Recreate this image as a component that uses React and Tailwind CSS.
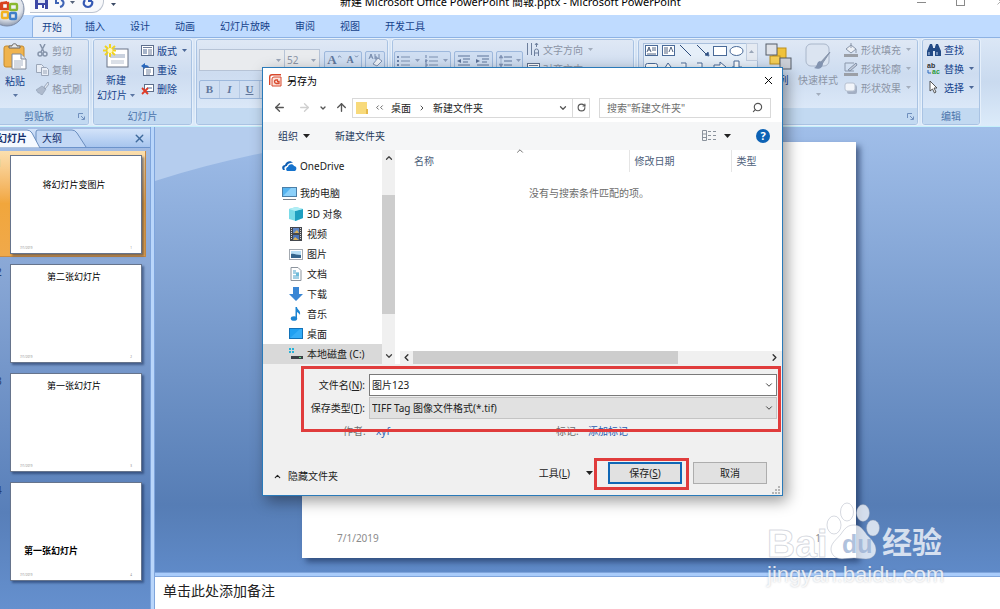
import React, { useState } from 'react';
import { ArrowLeft, ArrowRight, ArrowUp, ChevronDown, ChevronLeft, ChevronRight, ChevronUp, RotateCw, Search, X } from 'lucide-react';

const TABS = ['开始', '插入', '设计', '动画', '幻灯片放映', '审阅', '视图', '开发工具'];

const SLIDES = [
  { id: 1, title: '将幻灯片变图片', style: 'pt-[24px] pr-[4px] text-center' },
  { id: 2, title: '第二张幻灯片', style: 'pt-[7px] pr-[4px] text-center' },
  { id: 3, title: '第一张幻灯片', style: 'pt-[7px] pr-[4px] text-center' },
  { id: 4, title: '第一张幻灯片', style: 'pt-[63px] pl-[13px] font-bold' },
];

const FOLDERS = [
  { name: '3D 对象', icon: CubeIcon },
  { name: '视频', icon: VideoIcon },
  { name: '图片', icon: PictureIcon },
  { name: '文档', icon: DocumentIcon },
  { name: '下载', icon: DownloadIcon },
  { name: '音乐', icon: MusicIcon },
  { name: '桌面', icon: DesktopIcon },
  { name: '本地磁盘 (C:)', icon: DiskIcon, selected: true },
];

/* ---------- icons ---------- */

function Caret({ className = 'text-[#5b76a3]' }) {
  return (
    <svg width="5" height="3" viewBox="0 0 5 3" className={`shrink-0 ${className}`}>
      <path d="M0 0h5L2.5 3z" fill="currentColor" />
    </svg>
  );
}

function MenuArrow() {
  return (
    <svg width="7" height="4" viewBox="0 0 7 4" className="shrink-0">
      <path d="M0 0h7L3.5 4z" fill="#222" />
    </svg>
  );
}

function OfficeLogo() {
  return (
    <svg width="36" height="36" viewBox="0 0 36 36">
      <defs>
        <radialGradient id="orb" cx="50%" cy="35%" r="65%">
          <stop offset="0" stopColor="#fff" />
          <stop offset="0.7" stopColor="#dfe3ea" />
          <stop offset="1" stopColor="#8f9bb0" />
        </radialGradient>
      </defs>
      <circle cx="18" cy="18" r="17" fill="url(#orb)" stroke="#7d8ba5" />
      <path d="M9 12l9-2v3h-6v6H9z" fill="#d9431e" />
      <rect x="13" y="12" width="6" height="6" fill="none" stroke="#d9431e" strokeWidth="2.4" />
      <rect x="21" y="13" width="7" height="6" rx="1" fill="none" stroke="#8ab82f" strokeWidth="2.4" />
      <rect x="13" y="21" width="6" height="6" rx="1" fill="none" stroke="#f3b321" strokeWidth="2.4" />
      <rect x="21" y="22" width="6" height="6" rx="1" fill="none" stroke="#3f7fc9" strokeWidth="2.4" />
    </svg>
  );
}

function PasteIcon() {
  return (
    <svg width="24" height="27" viewBox="0 0 24 27">
      <rect x="1" y="3" width="20" height="21" rx="2" fill="#efb34e" stroke="#c58a2c" />
      <path d="M6 5V3h3c0-3 5-3 5 0h3v2z" fill="#e8e8e8" stroke="#666" />
      <path d="M9 11h9l5 5v10H9z" fill="#fff" stroke="#7e8797" />
      <path d="M18 11v5h5" fill="#dfe6ef" stroke="#7e8797" />
      <path d="M11 18h9M11 20h9M11 22h9M11 24h7" stroke="#a9b4c6" />
    </svg>
  );
}

function CutIcon() {
  return (
    <svg width="13" height="13" viewBox="0 0 13 13" fill="none" stroke="#8795ab" strokeWidth="1.5">
      <path d="M4 0l4 8M9 0L5 8" />
      <circle cx="4" cy="10" r="2" />
      <circle cx="9" cy="10" r="2" />
    </svg>
  );
}

function CopyIcon() {
  return (
    <svg width="13" height="13" viewBox="0 0 13 13" fill="#e9eef6" stroke="#9ba6b8">
      <path d="M.5 1.5h5l2 2v6h-7z" />
      <path d="M5.5 4.5h5l2 2v6h-7z" />
      <path d="M7 8h4M7 10h4" />
    </svg>
  );
}

function BrushIcon() {
  return (
    <svg width="13" height="13" viewBox="0 0 13 13">
      <path d="M0 8l6-4 4 3-4 6c-2 0-1-2-3-2s-1-2-3-3z" fill="#aebacd" stroke="#98a6bb" strokeWidth=".8" />
      <path d="M8 5l4-5 1 2-4 5z" fill="#dfe5ee" stroke="#8a98ae" strokeWidth=".8" />
    </svg>
  );
}

function NewSlideIcon() {
  return (
    <svg width="26" height="25" viewBox="0 0 26 25">
      <rect x="4" y="5" width="21" height="18" fill="#fff" stroke="#6a7487" />
      <rect x="7" y="10" width="15" height="4" fill="#c9d1de" />
      <path d="M8 17h13M8 19h13" stroke="#b6c0cf" />
      <path d="M7 0v13M0 6.5h13M2 2l10 9M12 2L2 11" stroke="#f1d320" strokeWidth="2" />
      <circle cx="7" cy="6.5" r="2.5" fill="#fff9bd" />
    </svg>
  );
}

function LayoutIcon() {
  return (
    <svg width="13" height="12" viewBox="0 0 13 12">
      <rect x=".5" y=".5" width="12" height="10" fill="#fff" stroke="#5e6f8c" />
      <path d="M2 2.5h9" stroke="#6f7f9c" />
      <rect x="2" y="4" width="4" height="5" fill="#a6b4ca" />
      <path d="M7 5h4M7 7h4M7 9h4" stroke="#6f7f9c" />
    </svg>
  );
}

function ResetIcon() {
  return (
    <svg width="13" height="13" viewBox="0 0 13 13">
      <rect x="2.5" y="4.5" width="10" height="8" fill="#fff" stroke="#5e6f8c" />
      <path d="M5 7h5M5 9h5M5 11h4" stroke="#7687a3" />
      <path d="M0 3l4-3v2c3 0 4 1 4 3-1-1-2-1-4-1v2z" fill="#2a68bd" />
    </svg>
  );
}

function DeleteIcon() {
  return (
    <svg width="13" height="12" viewBox="0 0 13 12">
      <rect x="3.5" y="1.5" width="9" height="7" fill="#fff" stroke="#5e6f8c" />
      <path d="M6 4h5v2H6z" fill="#a6b4ca" />
      <path d="M1 5l6 6M7 5l-6 6" stroke="#e03a26" strokeWidth="1.8" />
    </svg>
  );
}

function ListIcon({ numbered }) {
  return (
    <svg width="13" height="12" viewBox="0 0 13 12">
      <path d="M4 2h9M4 6h9M4 10h9" stroke="#7d90b0" strokeWidth="1.2" />
      <path d={numbered ? 'M1 0v3M0 5h2v1H0v1h2M0 9h2v2H0' : 'M0 1h2v2H0zM0 5h2v2H0zM0 9h2v2H0z'} fill={numbered ? 'none' : '#6c82a8'} stroke={numbered ? '#6c82a8' : 'none'} />
    </svg>
  );
}

function IndentIcon({ flip }) {
  return (
    <svg width="14" height="12" viewBox="0 0 14 12">
      <path d="M1 1h12M6 4h7M6 7h5M1 10h12" stroke="#5f7499" strokeWidth="1.2" />
      <path d={flip ? 'M0 4l4 2-4 2z' : 'M4 4L0 6l4 2z'} fill="#5f7499" />
    </svg>
  );
}

function SpacingIcon() {
  return (
    <svg width="14" height="12" viewBox="0 0 14 12">
      <path d="M5 2h8M5 6h8M5 10h8" stroke="#5f7499" strokeWidth="1.2" />
      <path d="M2 0l2 3H0zM2 12l2-3H0zM2 2v8" fill="#7f93b5" stroke="#7f93b5" strokeWidth=".6" />
    </svg>
  );
}

function TextDirectionIcon() {
  return (
    <svg width="13" height="13" viewBox="0 0 13 13" fill="none" stroke="#6d7f9d">
      <path d="M.5 0v12M4.5 0v12M7.5 13V8q0-2 2-2t2 2v5M8 10h4M9.5 0v4M8 2l1.5-2L11 2" />
    </svg>
  );
}

function ShapeGallery() {
  return (
    <svg width="115" height="56" viewBox="0 0 115 56" fill="none" stroke="#4a6a98">
      <rect x=".5" y=".5" width="114" height="55" fill="#e6eff9" stroke="#a9bfdc" />
      <rect x="103.500" y=".5" width="11" height="17" fill="#e5eaf2" stroke="#c1cddf" />
      <path d="M106 10h5l-2.5-3z" fill="#9aa6b8" stroke="none" />
      <rect x="2.5" y="2.5" width="12" height="10" fill="#fff" />
      <path d="M4 9l2-5 2 5M5 7h2M9 5h4M9 7h4M4 11h9" stroke="#243b60" strokeWidth=".8" />
      <rect x="19.5" y="2.5" width="12" height="10" fill="#fff" />
      <path d="M22 4v7M24 4v7M26 9l2-5 2 5" stroke="#243b60" strokeWidth=".8" />
      <path d="M37 2l11 11M54 2l10 10" stroke="#2f4d7c" />
      <path d="M66 13l-1-4-3 3z" fill="#2f4d7c" />
      <rect x="70.5" y="3.5" width="13" height="9" fill="#fff" />
      <ellipse cx="93.5" cy="8" rx="6.5" ry="4.5" fill="#fff" />
      <rect x="2.5" y="20.5" width="12" height="8" rx="2" fill="#fff" />
      <path d="M25 20l6 8H20zM38 20h5v8h5M54 20h5v8h5M71 22h6v-3l6 5-6 5v-3h-6zM91 18h5v6h3l-5 5-5-5h2z" fill="#fff" />
    </svg>
  );
}

function ArrangeIcon() {
  return (
    <svg width="27" height="27" viewBox="0 0 27 27">
      <rect x="8" y="5" width="13" height="12" fill="#f0c23b" stroke="#bd8f1c" />
      <rect x="5" y="13" width="10" height="8" fill="#f5cf58" stroke="#bd8f1c" />
      <rect x="1" y="1" width="11" height="11" fill="#dfe2e8" stroke="#555c69" />
      <rect x="15" y="15" width="11" height="11" fill="#cdd1d9" stroke="#555c69" />
    </svg>
  );
}

function QuickStyleIcon() {
  return (
    <svg width="26" height="27" viewBox="0 0 26 27">
      <rect x="1" y="1" width="23" height="22" rx="5" fill="#dbe4f1" stroke="#a9b6ca" />
      <path d="M25 9L15 20l2 1z" fill="#8d9bb2" stroke="#8593aa" />
      <path d="M15 18c-4 1-2 5-6 7 5 2 9 0 9-5z" fill="#8293b0" />
    </svg>
  );
}

function FillIcon() {
  return (
    <svg width="14" height="14" viewBox="0 0 14 14">
      <path d="M2 6l5-4 5 4-5 4z" fill="#eef1f6" stroke="#8b97aa" />
      <path d="M7 0v5M12 6v4" stroke="#8b97aa" />
      <rect x="0" y="11" width="14" height="3" fill="#9b9fa6" />
    </svg>
  );
}

function OutlineIcon() {
  return (
    <svg width="14" height="14" viewBox="0 0 14 14">
      <path d="M10 1H1v8h9" fill="none" stroke="#8b97aa" />
      <path d="M4 8l8-7 1 2-7 6z" fill="#c3cbd9" stroke="#8290a7" />
      <rect x="0" y="11" width="14" height="3" fill="#9b9fa6" />
    </svg>
  );
}

function EffectIcon() {
  return (
    <svg width="14" height="12" viewBox="0 0 14 12">
      <rect x="3" y="3" width="10" height="9" rx="2" fill="#a4b0c4" />
      <rect x="1" y="1" width="10" height="8" rx="2" fill="#f2f5fa" stroke="#b7c1d1" />
    </svg>
  );
}

function FindIcon() {
  return (
    <svg width="14" height="12" viewBox="0 0 14 12" fill="#234a85">
      <path d="M3 0h2l1 3v9H0V7zM9 0h2l3 7v5H8V3z" />
      <path d="M5 4h4v3H5z" />
      <path d="M2 8v3M10 8v3" stroke="#b9cdea" />
    </svg>
  );
}

function ReplaceIcon() {
  return (
    <svg width="14" height="14" viewBox="0 0 14 14" fontFamily="Liberation Sans" fontWeight="bold" fontSize="7">
      <text x="0" y="6" fill="#333">ab</text>
      <text x="5" y="12" fill="#2b9a3b">ac</text>
      <path d="M1 8v3h3" fill="none" stroke="#2a68bd" />
    </svg>
  );
}

function CursorIcon() {
  return (
    <svg width="14" height="13" viewBox="0 0 14 13">
      <path d="M3 0v10l2.5-2 2 4 1.5-1-2-4h3z" fill="#fff" stroke="#444" strokeWidth=".9" />
    </svg>
  );
}

function OneDriveIcon() {
  return (
    <svg width="15" height="10" viewBox="0 0 15 10">
      <path d="M1 9C-1 6 1 4 3 4c1-4 6-5 8-2-4-1-6 2-6 3-3 0-3 3-2 4z" fill="#0f5fb3" />
      <path d="M5 10c-2-2 0-4 1-4 0-3 5-4 6-1 3 0 3 4 1 5z" fill="#1673cd" />
    </svg>
  );
}

function ComputerIcon() {
  return (
    <svg width="15" height="13" viewBox="0 0 15 13">
      <rect x=".5" y=".5" width="14" height="9" fill="#55b4f0" stroke="#4b7fa8" />
      <path d="M1 9L9 1h5v8z" fill="#8bd0fa" />
      <path d="M1 12.5h13" stroke="#77818c" />
    </svg>
  );
}

function CubeIcon() {
  return (
    <svg width="14" height="14" viewBox="0 0 14 14">
      <path d="M0 2l7-2 7 2v9l-7 3-7-2z" fill="#7adbe8" />
      <path d="M6 4l8-2v9l-8 3z" fill="#1f9fc0" />
      <path d="M0 2l7-2 7 2-8 2z" fill="#b2eef5" />
    </svg>
  );
}

function VideoIcon() {
  return (
    <svg width="14" height="14" viewBox="0 0 14 14">
      <rect x="1" width="12" height="14" fill="#44474d" />
      <path d="M2.5 1v12M11.5 1v12" stroke="#d8d8d8" strokeDasharray="1 1" />
      <rect x="4" y="1" width="6" height="5" fill="#5f86c4" />
      <rect x="4" y="8" width="6" height="5" fill="#4a73b6" />
      <path d="M5 6l3-3 2 3zM4 13l2-3 4 3z" fill="#d8b05a" />
    </svg>
  );
}

function PictureIcon() {
  return (
    <svg width="14" height="11" viewBox="0 0 14 11">
      <rect x=".5" y=".5" width="13" height="10" fill="#fff" stroke="#a3a9b0" />
      <rect x="2" y="2" width="10" height="4" fill="#b7def5" />
      <path d="M2 5c3-1 5 1 10 1v3H2z" fill="#34658d" />
    </svg>
  );
}

function DocumentIcon() {
  return (
    <svg width="14" height="14" viewBox="0 0 14 14">
      <path d="M2 .5h7l3 3v10H2z" fill="#fff" stroke="#8d959e" />
      <path d="M4 4h3M4 6h6M4 9h6M4 11h6" stroke="#46a1cb" />
      <path d="M7 6h3v3H7z" fill="#6ebbd9" />
    </svg>
  );
}

function DownloadIcon() {
  return (
    <svg width="14" height="14" viewBox="0 0 14 14">
      <path d="M4 0h6v7h4l-7 7-7-7h4z" fill="#3a86d4" />
    </svg>
  );
}

function MusicIcon() {
  return (
    <svg width="14" height="14" viewBox="0 0 14 14" fill="#1c84d2">
      <ellipse cx="5" cy="11.5" rx="3.2" ry="2.3" />
      <path d="M6.5 0H8c0 3 4 3 3 8-1-2-2-2-3-3v6.5H6.5z" />
    </svg>
  );
}

function DesktopIcon() {
  return (
    <svg width="14" height="12" viewBox="0 0 14 12">
      <rect x=".5" y=".5" width="13" height="10" fill="#1fa0f2" stroke="#1272b8" />
      <path d="M1 10L11 1h2v9z" fill="#45b6fa" opacity=".6" />
    </svg>
  );
}

function DiskIcon() {
  return (
    <svg width="14" height="12" viewBox="0 0 14 12">
      <path d="M0 0h2v2H0zM3 0h2v2H3zM0 3h2v2H0zM3 3h2v2H3z" fill="#27b3d8" />
      <rect x="2" y="8" width="12" height="3" fill="#3c4147" />
      <rect x="10" y="9" width="2" height="1" fill="#58e27d" />
    </svg>
  );
}

function PptIcon() {
  return (
    <svg width="13" height="13" viewBox="0 0 13 13" fill="none" stroke="#d9492c">
      <path d="M.7 11V3q0-2.300 2.300-2.300h9" strokeWidth="1.400" />
      <path d="M3 12V5q0-2 2-2h7v9z" fill="#fbe3dc" strokeWidth="1" />
      <path d="M9 6H7Q5.500 6 5.500 7.500T7 9.500h1M8 7.500h2v2H8" strokeWidth="1.300" />
    </svg>
  );
}

/* ---------- window chrome ---------- */

function TitleBar() {
  return (
    <header className="relative h-[15px] bg-white">
      <div className="flex h-full items-start overflow-hidden">
        <div className="ml-[30px] flex h-[13px] w-[74px] shrink-0 items-start gap-[5px] rounded-br-xl border-r border-b border-[#bcc3cf] bg-[#f8f9fb] pl-[5px]">
          <button aria-label="保存" className="h-[9px]">
            <svg width="13" height="9" viewBox="0 0 13 9">
              <path d="M0 0h13v9H0z" fill="#3c47a5" />
              <path d="M3 0h7v3H3z" fill="#dfe4f5" />
              <path d="M3 5h7v4H3z" fill="#fff" />
              <path d="M7 5h2v3H7z" fill="#3c47a5" />
            </svg>
          </button>
          <button aria-label="撤消" className="flex gap-[4px]">
            <svg width="13" height="9" viewBox="0 0 13 9" fill="none" stroke="#3f64b5" strokeWidth="2">
              <path d="M3 0v3h3M8 0c4 1 3 6-1 7" />
            </svg>
            <Caret className="mt-[1px] text-[#55627a]" />
          </button>
          <button aria-label="恢复" className="ml-[2px]">
            <svg width="13" height="9" viewBox="0 0 13 9" fill="none" stroke="#3559b4" strokeWidth="2.200">
              <path d="M3 0C0 4 3 7 6 7s5-3 4-6M6 1h4" />
            </svg>
          </button>
        </div>
        <Caret className="mt-[3px] ml-[7px] text-[#3b4a66]" />
        <h1 className="mt-[-6px] ml-[224px] text-[11px] leading-4 whitespace-nowrap text-black">
          新建 Microsoft Office PowerPoint 簡報.pptx - Microsoft PowerPoint
        </h1>
        <div className="ml-auto flex h-[6px] shrink-0 items-end gap-[30px] text-[#8a8a8a]">
          <button aria-label="最小化" className="mb-[3px] h-px w-[9px] border-b border-[#8a8a8a]" />
          <button aria-label="最大化" className="h-[6px] w-[9px] border border-t-0 border-[#8a8a8a]" />
          <button aria-label="关闭" className="mr-[-6px] h-[6px] overflow-hidden"><X size={11} strokeWidth={1.500} className="-mt-1" /></button>
        </div>
      </div>
      <button aria-label="Office 按钮" className="absolute top-[-9px] left-[-11px] z-10"><OfficeLogo /></button>
    </header>
  );
}

function RibbonTabs() {
  const [active, setActive] = useState('开始');
  return (
    <nav className="flex h-[22px] gap-px bg-[#bfdbff] pl-[32px]">
      {TABS.map(tab => (
        <button
          key={tab}
          onClick={() => setActive(tab)}
          className={`text-[10px] leading-5 text-[#15428b] ${
            active === tab ? 'mt-px rounded-t-sm border border-b-0 border-[#8db2e3] bg-[#e6eef9] px-[9px]' : 'px-[12px]'
          }`}
        >
          {tab}
        </button>
      ))}
    </nav>
  );
}

function Launcher() {
  return (
    <svg width="7" height="7" viewBox="0 0 7 7" fill="none" stroke="#6f8fbd">
      <path d="M.5 5V.5H5M3 3l3 3M6.5 3.5v3h-3" />
    </svg>
  );
}

function RibbonGroup({ label, launcher, className, children }) {
  return (
    <section className={`flex shrink-0 flex-col overflow-hidden rounded-[3px] border border-[#a9c3e3] shadow-[0_0_0_1px_#e6f0fb] ${className}`}>
      <div className="flex h-[68px] bg-linear-to-b from-[#dfe8f5] via-[#cddcf0] to-[#dbe8f8]">{children}</div>
      <div className="flex h-4 items-center bg-[#c2d9f1] text-[10px] leading-4 text-[#4a74ac]">
        <span className="flex-1 text-center">{label}</span>
        {launcher && <button aria-label={`${label}选项`} className="mr-[3px]"><Launcher /></button>}
      </div>
    </section>
  );
}

function SmallButton({ icon, label, caret, disabled }) {
  return (
    <button className={`flex h-[19px] items-center gap-[3px] text-[10px] leading-4 whitespace-nowrap ${disabled ? 'text-[#8b94a5]' : 'text-[#15428b]'}`}>
      <span className="flex w-[14px] justify-center">{icon}</span>
      {label}
      {caret && <Caret className={disabled ? 'ml-[2px] text-[#a3adbd]' : 'ml-[2px] text-[#4b6798]'} />}
    </button>
  );
}

function ToolBox({ children, className = '' }) {
  return (
    <div className={`flex h-[19px] shrink-0 items-center rounded-[2px] border border-[#9db8dc] bg-[#cfdef2] font-['Liberation_Serif',serif] font-bold text-[#61779c] ${className}`}>
      {children}
    </div>
  );
}

function Ribbon() {
  return (
    <div className="flex gap-[4px] overflow-hidden border-t border-b border-t-[#8db2e3] border-b-[#c5f0fb] bg-linear-to-b from-[#dbe7f6] via-[#c9daef] to-[#dcebfa] py-px text-[#15428b]">
      <RibbonGroup label="剪贴板" launcher className="w-[89px] rounded-l-none border-l-0">
        <button className="flex w-[30px] flex-col items-center pt-[3px] text-[10px] leading-4">
          <PasteIcon />
          <span className="mt-[3px] whitespace-nowrap">粘贴</span>
          <Caret className="mt-[5px] text-[#5b76a3]" />
        </button>
        <div className="ml-[5px] pt-[1px]">
          <SmallButton disabled icon={<CutIcon />} label="剪切" />
          <SmallButton disabled icon={<CopyIcon />} label="复制" />
          <SmallButton disabled icon={<BrushIcon />} label="格式刷" />
        </div>
      </RibbonGroup>

      <RibbonGroup label="幻灯片" className="w-[99px]">
        <button className="flex w-[44px] flex-col items-center pt-[4px] text-[10px] leading-[15px]">
          <NewSlideIcon />
          <span className="mt-1">新建</span>
          <span className="flex items-center gap-[3px] whitespace-nowrap">幻灯片<Caret /></span>
        </button>
        <div className="ml-[2px] pt-[1px]">
          <SmallButton icon={<LayoutIcon />} label="版式" caret />
          <SmallButton icon={<ResetIcon />} label="重设" />
          <SmallButton icon={<DeleteIcon />} label="删除" />
        </div>
      </RibbonGroup>

      <RibbonGroup label="字体" launcher className="w-[192px]">
        <div className="px-[2px] pt-[9px]">
          <div className="flex items-center">
            <div className="relative">
              <select aria-label="字体" disabled className="block h-[22px] w-[86px] appearance-none border border-[#b6c3d6] bg-[#e9ebee]" />
              <Caret className="pointer-events-none absolute top-[10px] right-[4px] text-[#9aa5b8]" />
            </div>
            <div className="relative -ml-px">
              <select aria-label="字号" disabled className="block h-[22px] w-[36px] appearance-none border border-[#b6c3d6] bg-[#e9ebee] pl-[2px] text-[10px] text-[#8b94a5]">
                <option>52</option>
              </select>
              <Caret className="pointer-events-none absolute top-[10px] right-[4px] text-[#9aa5b8]" />
            </div>
            <ToolBox className="ml-[4px] w-[38px] justify-around">
              <button aria-label="增大字号" className="flex items-center text-[13px] leading-4">A<ChevronUp size={5} strokeWidth={4} className="mb-2" /></button>
              <button aria-label="减小字号" className="flex items-center text-[10px] leading-4">A<ChevronDown size={5} strokeWidth={4} className="mb-2" /></button>
            </ToolBox>
            <ToolBox className="ml-[3px] w-[20px] justify-around">
              <button aria-label="清除格式">
                <svg width="14" height="14" viewBox="0 0 14 14">
                  <path d="M1 6l2-5 2 5M2 4h2M7 1v5h2V4H7M11 1v5" fill="none" stroke="#61779c" strokeWidth=".8" />
                  <path d="M5 11l5-6 4 3-5 5z" fill="#eef2f8" stroke="#7f92b2" />
                </svg>
              </button>
            </ToolBox>
          </div>
          <ToolBox className="mt-[9px] w-[150px] text-[11px]">
            <button className="h-full w-[20px] border-r border-[#b5c9e4]">B</button>
            <button className="h-full w-[20px] border-r border-[#b5c9e4] italic">I</button>
            <button className="h-full w-[20px] border-r border-[#b5c9e4] underline">U</button>
          </ToolBox>
        </div>
      </RibbonGroup>

      <RibbonGroup label="段落" launcher className="w-[242px]">
        <div className="flex gap-[3px] pt-[11px] pl-px">
          <ToolBox className="w-[57px] justify-around">
            <button aria-label="项目符号"><ListIcon /></button><Caret className="text-[#8fa0bd]" />
            <button aria-label="编号"><ListIcon numbered /></button><Caret className="text-[#8fa0bd]" />
          </ToolBox>
          <ToolBox className="w-[39px] justify-around">
            <button aria-label="减少缩进"><IndentIcon /></button>
            <button aria-label="增加缩进"><IndentIcon flip /></button>
          </ToolBox>
          <ToolBox className="w-[27px] justify-around">
            <button aria-label="行距"><SpacingIcon /></button><Caret className="text-[#8fa0bd]" />
          </ToolBox>
        </div>
        <div className="ml-[3px]">
          <SmallButton disabled icon={<TextDirectionIcon />} label="文字方向" caret />
          <SmallButton disabled icon={<LayoutIcon />} label="对齐文本" caret />
        </div>
      </RibbonGroup>

      <RibbonGroup label="绘图" launcher className="w-[280px]">
        <button aria-label="形状" className="h-[56px] pt-[3px] pl-[4px]"><ShapeGallery /></button>
        <button className="ml-[7px] flex flex-col items-center pt-[3px] text-[10px] leading-4">
          <ArrangeIcon />
          <span className="mt-[2px]">排列</span>
        </button>
        <button className="ml-[6px] flex flex-col items-center pt-[3px] text-[10px] leading-4 text-[#8b94a5]">
          <QuickStyleIcon />
          <span className="mt-[2px] whitespace-nowrap">快速样式</span>
          <Caret className="mt-[5px] text-[#a3adbd]" />
        </button>
        <div className="ml-[6px]">
          <SmallButton disabled icon={<FillIcon />} label="形状填充" caret />
          <SmallButton disabled icon={<OutlineIcon />} label="形状轮廓" caret />
          <SmallButton disabled icon={<EffectIcon />} label="形状效果" caret />
        </div>
      </RibbonGroup>

      <RibbonGroup label="编辑" className="w-[58px]">
        <div className="ml-[4px]">
          <SmallButton icon={<FindIcon />} label="查找" />
          <SmallButton icon={<ReplaceIcon />} label="替换" caret />
          <SmallButton icon={<CursorIcon />} label="选择" caret />
        </div>
      </RibbonGroup>
    </div>
  );
}

/* ---------- workspace ---------- */

function SlidePanel() {
  const [current, setCurrent] = useState(1);
  return (
    <aside className="flex w-[150px] shrink-0 flex-col overflow-hidden bg-linear-to-b from-[#a6bfe6] via-[#587fb9] via-80% to-[#6590ce]">
      <div className="relative mt-[2px] flex h-[19px] items-center border-b border-[#6c93cb] bg-linear-to-b from-[#d3e3f9] to-[#a7c5ee] text-[10px] text-[#15306e]">
        <svg width="90" height="19" viewBox="0 0 90 19" className="absolute top-0 left-0">
          <path d="M36 18V3q0-2 2-2h34q3 0 5 3l9 14" fill="#c3d8f5" stroke="#6b8ebf" />
          <path d="M-2 19V1h29q3 0 5 3l8 15z" fill="#f5f9ff" stroke="#6b8ebf" />
        </svg>
        <button className="relative -ml-[3px] font-bold whitespace-nowrap">幻灯片</button>
        <button className="relative ml-[15px]">大纲</button>
        <button aria-label="关闭窗格" className="relative mr-[4px] ml-auto text-[#3f6a9c]"><X size={13} strokeWidth={2.500} /></button>
      </div>
      <div className="pt-[3px]">
        {SLIDES.map(slide => (
          <button
            key={slide.id}
            onClick={() => setCurrent(slide.id)}
            className={`mb-[3px] flex h-[106px] w-[146px] items-start pt-[4px] text-left ${
              current === slide.id ? 'border-r border-b border-[#c98a43] bg-linear-to-b from-[#fbdfae] via-[#f1a63c] to-[#f0a94a]' : ''
            }`}
          >
            <span className="-ml-[4px] w-[14px] shrink-0 text-[10px] leading-4 text-[#26406e]">{slide.id}</span>
            <span className="flex h-[99px] w-[132px] flex-col border border-[#66748c] bg-white text-black shadow-[2px_2px_2px_rgba(20,40,80,0.5)]">
              <span className={`flex-1 text-[9px] leading-[10px] ${slide.style}`}>{slide.title}</span>
              <span className="flex justify-between px-[9px] pb-[3px] text-[3px] leading-[4px] text-[#8a8a8a]">
                <span>7/1/2019</span>
                <span>{slide.id}</span>
              </span>
            </span>
          </button>
        ))}
      </div>
    </aside>
  );
}

function Canvas() {
  return (
    <main className="relative flex flex-1 items-start justify-center bg-linear-to-b from-[#a0bee9] via-[#567db5] via-85% to-[#5f8ac8] pt-[15px] pb-[14px] pl-[3px]">
      {/* light sweep across the backdrop */}
      <svg className="absolute top-0 left-0 h-[56px] w-full" viewBox="0 0 845 56" preserveAspectRatio="none">
        <path d="M0 0H300C200 8 100 22 0 54z" fill="#b5cdee" />
      </svg>
      <div className="relative flex h-[416px] w-[554px] flex-col justify-end bg-white shadow-[4px_4px_6px_rgba(20,40,80,0.6)]">
        <div className="flex justify-between px-[35px] pb-[12px] text-[10px] leading-4 text-[#8b8b8b]">
          <span>7/1/2019</span>
          <span>1</span>
        </div>
      </div>
    </main>
  );
}

/* ---------- save dialog ---------- */

function FolderTree() {
  return (
    <div className="flex w-[132px] shrink-0 text-[10px] leading-4 text-[#222]">
      <ul className="flex-1">
        <li className="flex h-[32px] items-center gap-[3px] pl-[19px]"><OneDriveIcon />OneDrive</li>
        <li className="flex h-[22px] items-center gap-[3px] pl-[19px]"><ComputerIcon />我的电脑</li>
        {FOLDERS.map(({ name, icon: Icon, selected }) => (
          <li key={name} className={`flex h-[20px] items-center gap-[4px] pl-[26px] ${selected ? 'bg-[#d9d9d9]' : ''}`}>
            <Icon />
            {name}
          </li>
        ))}
      </ul>
      <div className="flex w-[13px] flex-col items-center bg-[#f0f0f0] text-[#444]">
        <ChevronUp size={10} strokeWidth={3} className="mt-[3px] mb-[32px]" />
        <div className="w-full flex-1 bg-[#cdcdcd]" />
        <ChevronDown size={10} strokeWidth={3} className="mt-[37px] mb-[3px]" />
      </div>
    </div>
  );
}

function FileList() {
  return (
    <div className="flex flex-1 flex-col pl-[5px]">
      <div className="relative flex-1">
        <table className="w-full text-[10px] leading-4 text-[#4c607a]">
          <thead>
            <tr className="h-[22px]">
              <th className="pl-[14px] text-left font-normal">名称</th>
              <th className="w-[102px] border-l border-[#e5e5e5] pl-[5px] text-left font-normal">修改日期</th>
              <th className="w-[51px] border-l border-[#e5e5e5] pl-[5px] text-left font-normal">类型</th>
            </tr>
          </thead>
          <tbody>
            <tr>
              <td colSpan={3} className="pt-[13px] pr-[4px] text-center text-[#6d6d6d]">没有与搜索条件匹配的项。</td>
            </tr>
          </tbody>
        </table>
        <ChevronUp size={10} strokeWidth={2} className="absolute -top-[4px] left-[115px] text-[#555]" />
      </div>
      <div className="flex h-[13px] items-center bg-[#f0f0f0] text-[#333]">
        <ChevronLeft size={11} strokeWidth={3} className="mx-[1px]" />
        <div className="h-full w-[265px] bg-[#cdcdcd]" />
        <ChevronRight size={11} strokeWidth={3} className="mr-[2px] ml-auto" />
      </div>
    </div>
  );
}

function SaveDialog() {
  const [fileName, setFileName] = useState('图片123');

  return (
    <div role="dialog" aria-label="另存为" className="absolute top-[67px] left-[262px] z-20 w-[521px] border border-[#2a7ab9] bg-white text-[10px] leading-4 text-[#222] shadow-[4px_5px_14px_rgba(0,0,0,0.4)]">
      <div className="flex h-[25px] items-center gap-[5px] pr-[7px] pl-[6px]">
        <PptIcon />
        <h2 className="flex-1 text-black">另存为</h2>
        <button aria-label="关闭" className="text-black"><X size={13} strokeWidth={1.800} /></button>
      </div>

      <div className="flex h-[29px] items-center pr-[11px] pl-[10px] text-[#555]">
        <button aria-label="后退"><ArrowLeft size={13} strokeWidth={2.500} /></button>
        <button aria-label="前进" className="ml-[12px] text-[#cfcfcf]"><ArrowRight size={13} strokeWidth={2.500} /></button>
        <button aria-label="最近位置" className="ml-[8px]"><ChevronDown size={8} strokeWidth={4} /></button>
        <button aria-label="上移" className="ml-[8px]"><ArrowUp size={13} strokeWidth={2.500} /></button>
        <div className="ml-[4px] flex h-[20px] w-[238px] items-center border border-[#d9d9d9]">
          <svg width="12" height="14" viewBox="0 0 12 14" className="ml-[3px]">
            <path d="M0 1h11v12H0z" fill="#f8da7b" />
            <path d="M10 8h2v5h-2z" fill="#e5b94c" />
          </svg>
          <button aria-label="上级文件夹" className="ml-[6px] flex">
            <ChevronLeft size={7} strokeWidth={3} className="-mr-[3px]" />
            <ChevronLeft size={7} strokeWidth={3} />
          </button>
          <a href="#desktop" className="ml-[6px] text-[#222]">桌面</a>
          <ChevronRight size={8} strokeWidth={3} className="mx-[7px]" />
          <a href="#folder" className="text-[#222]">新建文件夹</a>
          <button aria-label="展开地址" className="ml-auto flex h-full w-[18px] items-center justify-center"><ChevronDown size={10} strokeWidth={3} /></button>
          <button aria-label="刷新" className="flex h-full w-[17px] items-center justify-center border-l border-[#d9d9d9]"><RotateCw size={9} strokeWidth={3} /></button>
        </div>
        <div className="ml-auto flex h-[20px] w-[172px] items-center border border-[#d9d9d9] px-[7px]">
          <input aria-label="搜索" placeholder={'搜索"新建文件夹"'} className="min-w-0 flex-1 outline-none placeholder:text-[#6d6d6d]" />
          <Search size={11} strokeWidth={2.500} className="-scale-x-100" />
        </div>
      </div>

      <div className="flex h-[28px] items-center bg-[#f5f6f7] pr-[12px] pl-[15px] text-[#1e395b]">
        <button className="flex items-center gap-[5px]">组织<MenuArrow /></button>
        <button className="ml-[25px]">新建文件夹</button>
        <button aria-label="视图" className="ml-auto flex items-center gap-[8px]">
          <svg width="14" height="12" viewBox="0 0 14 12" fill="none" stroke="#8a929c">
            <path d="M.5 .5h4v10h-4zM.5 4h4M.5 7.500h4M6 1.500h3M11 1.500h3M6 5.500h3M11 5.500h3M6 9.500h3M11 9.500h3" />
          </svg>
          <MenuArrow />
        </button>
        <button aria-label="帮助" className="ml-[25px] h-[14px] w-[14px] rounded-full bg-[#0d62b5] text-center text-[11px] leading-[14px] font-bold text-white">?</button>
      </div>

      <div className="flex h-[214px]">
        <FolderTree />
        <FileList />
      </div>

      <div className="bg-[#f0f0f0]">
        <div className="relative pt-[10px] pr-[5px]">
          <div className="flex h-[22px]">
            <label htmlFor="file-name" className="w-[106px] pt-[3px] pr-[4px] text-right">文件名(<u>N</u>):</label>
            <div className="flex flex-1 items-center border border-[#7a7a7a] bg-white pr-[2px]">
              <input id="file-name" value={fileName} onChange={e => setFileName(e.target.value)} className="min-w-0 flex-1 pl-[2px] outline-none" />
              <ChevronDown size={10} strokeWidth={2} />
            </div>
          </div>
          <div className="relative mt-px flex h-[22px]">
            <label htmlFor="file-type" className="w-[106px] pt-[3px] pr-[4px] text-right">保存类型(<u>T</u>):</label>
            <select id="file-type" className="flex-1 appearance-none border border-[#c4c4c4] bg-[#e1e1e1] pl-[2px] outline-none">
              <option>TIFF Tag 图像文件格式(*.tif)</option>
            </select>
            <ChevronDown size={10} strokeWidth={2} className="pointer-events-none absolute top-[6px] right-[3px]" />
          </div>
          <div className="flex pt-[4px] pb-[3px] pl-[80px] text-[#6d6d6d]">
            <span className="w-[33px]">作者:</span>
            <a href="#author" className="w-[180px] text-[#2a5db0]">xyf</a>
            <span className="w-[32px]">标记:</span>
            <a href="#tags" className="text-[#2a5db0]">添加标记</a>
          </div>
          <div className="pointer-events-none absolute top-[2px] right-px left-[38px] h-[66px] border-3 border-[#e03c3c]" />
        </div>

        <div className="flex h-[53px] items-center pr-[15px] pl-[10px]">
          <button className="mt-[15px] flex items-center gap-[6px]"><ChevronUp size={9} strokeWidth={3} />隐藏文件夹</button>
          <button className="mt-[9px] ml-auto flex items-center gap-[16px]"><span>工具(<u>L</u>)</span><MenuArrow /></button>
          <div className="relative mt-[9px] ml-[15px]">
            <button className="block h-[22px] w-[74px] border-2 border-[#1067b5] bg-[#e1e1e1] leading-4">保存(<u>S</u>)</button>
            <div className="pointer-events-none absolute -top-[4px] -right-[7px] -bottom-[6px] -left-[14px] border-3 border-[#e03c3c]" />
          </div>
          <button className="mt-[9px] ml-[11px] h-[22px] w-[74px] border border-[#adadad] bg-[#e1e1e1] leading-4">取消</button>
        </div>
        <svg width="8" height="8" viewBox="0 0 8 8" className="absolute right-[2px] bottom-[1px]">
          <path d="M6 0h2v2H6zM3 3h2v2H3zM6 3h2v2H6zM0 6h2v2H0zM3 6h2v2H3zM6 6h2v2H6z" fill="#b5b5b5" />
        </svg>
      </div>
    </div>
  );
}

function Watermark() {
  return (
    <div className="pointer-events-none absolute top-[500px] left-[767px] z-10 w-[180px] font-['Liberation_Sans','Noto_Sans_CJK_SC',sans-serif] text-white/75">
      <svg width="90" height="62" viewBox="0 0 90 62" className="absolute top-0 left-[57px]" fill="#fff" fillOpacity=".75" stroke="#8a93a5" strokeOpacity=".35">
        <ellipse cx="10" cy="25" rx="7" ry="9" />
        <ellipse cx="23" cy="12" rx="6.5" ry="9" />
        <ellipse cx="39" cy="13" rx="6.5" ry="8.5" />
        <ellipse cx="49" cy="28" rx="6.5" ry="8" />
        <path d="M30 25c6 0 9 4 13 10 5 5 9 9 9 15s-5 9-10 9-8-1-12-1-8 1-12 1c-6 0-11-4-11-10s6-10 10-15c4-6 7-9 13-9z" />
      </svg>
      <div className="relative flex h-[62px] items-end whitespace-nowrap">
        <span className="w-[75px] text-[39px] leading-[36px] font-bold text-white/80 [-webkit-text-stroke:1px_rgba(138,147,165,0.35)]">Bai</span>
        <span className="w-[40px] text-[25px] leading-[36px] font-bold text-[#9bb1d4]/80">du</span>
        <span className="text-[30px] leading-[38px] font-bold">经验</span>
      </div>
      <div className="relative text-[22px] leading-[26px] text-white/80 [text-shadow:0_0_2px_rgba(70,80,100,0.35)]">jingyan.baidu.com</div>
    </div>
  );
}

export default function App() {
  return (
    <div className="relative flex min-h-screen flex-col overflow-hidden bg-[#bfdbff] font-['Noto_Sans','Noto_Sans_CJK_SC',sans-serif]">
      <TitleBar />
      <RibbonTabs />
      <Ribbon />
      <div className="flex flex-1">
        <SlidePanel />
        <div className="w-[5px] shrink-0 border-x border-[#7fa5dc] bg-[#b9d6fb]" />
        <div className="flex min-w-0 flex-1 flex-col">
          <Canvas />
          <div className="h-[5px] border-y border-[#7fa5dc] bg-[#a9ccfb]" />
          <textarea
            aria-label="备注"
            defaultValue="单击此处添加备注"
            className="block h-[32px] resize-none bg-white px-[8px] pt-[4px] text-[14px] leading-5 text-[#222] outline-none"
          />
        </div>
      </div>
      <SaveDialog />
      <Watermark />
    </div>
  );
}
